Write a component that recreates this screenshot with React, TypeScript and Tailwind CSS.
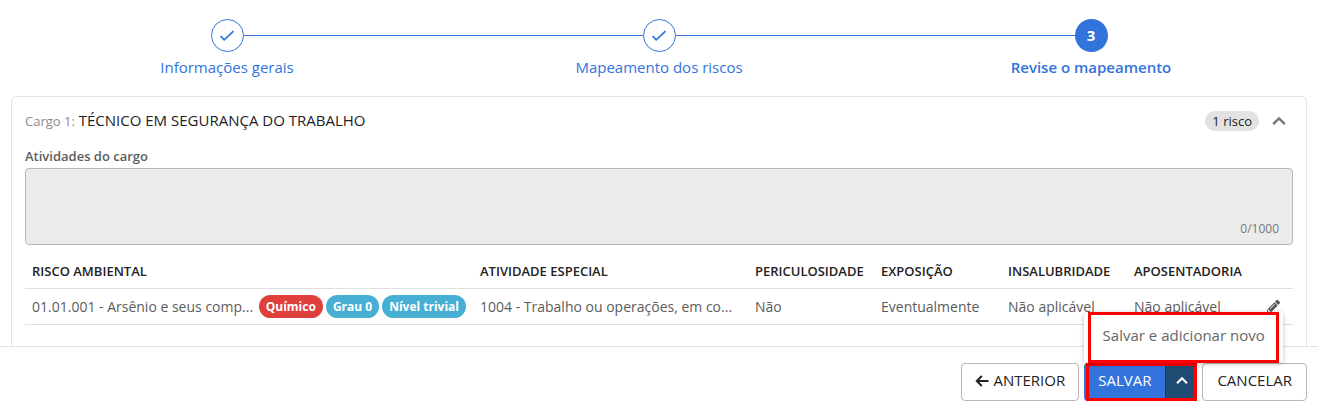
import React from "react";

const steps = [
  { label: "Informações gerais", done: true },
  { label: "Mapeamento dos riscos", done: true },
  { label: "Revise o mapeamento", done: false },
];

const riscos = [
  {
    risco: "01.01.001 - Arsênio e seus comp...",
    tags: [
      { text: "Químico", color: "bg-[#df403c]" },
      { text: "Grau 0", color: "bg-[#48afd4]" },
      { text: "Nível trivial", color: "bg-[#48afd4]" },
    ],
    atividade: "1004 - Trabalho ou operações, em co...",
    periculosidade: "Não",
    exposicao: "Eventualmente",
    insalubridade: "Não aplicável",
    aposentadoria: "Não aplicável",
  },
];

function CheckIcon() {
  return (
    <svg width="16" height="12" viewBox="0 0 16 12" fill="none" stroke="currentColor" strokeWidth="1.8">
      <path d="M1.5 6.2 L5.2 9.8 L14.5 1.2" />
    </svg>
  );
}

function ChevronUp({ className }: { className: string }) {
  return (
    <svg className={className} viewBox="0 0 14 10" fill="none" stroke="currentColor" strokeWidth="2.4">
      <path d="M1.2 8.2 L7 2.4 L12.8 8.2" />
    </svg>
  );
}

function ArrowLeft() {
  return (
    <svg width="14" height="12" viewBox="0 0 14 12" fill="none" stroke="currentColor" strokeWidth="2">
      <path d="M13.5 6 H1.8 M6.8 1 L1.8 6 L6.8 11" />
    </svg>
  );
}

function PencilIcon() {
  return (
    <svg width="13" height="13" viewBox="0 0 512 512" fill="currentColor">
      <path d="M497.9 142.1l-46.1 46.1c-4.700 4.700-12.300 4.700-17 0l-111-111c-4.700-4.700-4.700-12.300 0-17l46.100-46.100c18.700-18.700 49.100-18.700 67.900 0l60.100 60.100c18.800 18.700 18.800 49.100 0 67.900zM284.200 99.800L21.600 362.400.4 483.900c-2.900 16.400 11.400 30.600 27.800 27.800l121.500-21.300 262.600-262.600c4.700-4.700 4.700-12.300 0-17l-111-111c-4.800-4.700-12.400-4.700-17.100 0zM124.100 339.900c-5.500-5.500-5.500-14.300 0-19.800l154-154c5.500-5.500 14.300-5.500 19.800 0s5.500 14.300 0 19.800l-154 154c-5.500 5.500-14.300 5.500-19.800 0zM88 424h48v36.300l-64.500 11.300-31.100-31.100L51.700 376H88v48z" />
    </svg>
  );
}

export default function App() {
  return (
    <div className="bg-white font-['Open_Sans',sans-serif] text-[#222]">
      {/* Steps */}
      <ol className="grid grid-cols-3 px-[11px] pt-[19px] text-[#3273dc]">
        {steps.map((step, i) => (
          <li key={step.label} className="flex flex-col items-center">
            <div className="flex w-full items-center">
              <span className={i === 0 ? "h-px flex-1" : "h-px flex-1 bg-[#3273dc]"} />
              <span
                className={
                  step.done
                    ? "flex size-[33px] items-center justify-center rounded-full border border-[#3273dc]"
                    : "flex size-[33px] items-center justify-center rounded-full bg-[#3273dc] text-[15px] font-bold text-white"
                }
              >
                {step.done ? <CheckIcon /> : i + 1}
              </span>
              <span className={i === steps.length - 1 ? "h-px flex-1" : "h-px flex-1 bg-[#3273dc]"} />
            </div>
            <span className={step.done ? "mt-[3px] text-[15px] leading-6" : "mt-[3px] text-[15px] leading-6 font-semibold"}>
              {step.label}
            </span>
          </li>
        ))}
      </ol>

      {/* Cargo */}
      <main className="px-[11px] pt-[17px]">
        <section className="rounded-t-md border border-b-0 border-[#e2e2e2] px-[13px] pt-[11px] pb-[21px]">
          <header className="flex items-center justify-between">
            <h2 className="text-[15px] leading-6">
              <span className="text-[13px] text-[#8c8c8c]">Cargo 1:</span> TÉCNICO EM SEGURANÇA DO TRABALHO
            </h2>
            <div className="flex items-center gap-[13px] pr-[7px]">
              <span className="rounded-full bg-[#e2e2e2] px-[7px] text-[13px] leading-5">1 risco</span>
              <button type="button" aria-label="Recolher cargo" className="text-[#777]">
                <ChevronUp className="h-[10px] w-[14px]" />
              </button>
            </div>
          </header>

          <label htmlFor="atividades" className="mt-[11px] block text-[13px] leading-6 font-semibold text-[#5c5c5c]">
            Atividades do cargo
          </label>
          <div className="relative">
            <textarea
              id="atividades"
              disabled
              className="block h-[77px] w-full resize-none rounded border border-[#b8b8b8] bg-[#ececec]"
            />
            <span className="absolute right-[14px] bottom-2 text-[12px] leading-4 text-[#777]">0/1000</span>
          </div>

          <table className="mt-[10px] w-full table-fixed text-left text-[14px] text-[#5c5c5c]">
            <thead>
              <tr className="h-[33px] border-b border-[#e0e0e0] text-[13px] whitespace-nowrap text-[#222]">
                <th className="px-[7px] font-semibold">RISCO AMBIENTAL</th>
                <th className="w-[275px] px-[7px] font-semibold">ATIVIDADE ESPECIAL</th>
                <th className="w-[126px] px-[7px] font-semibold">PERICULOSIDADE</th>
                <th className="w-[127px] px-[7px] font-semibold">EXPOSIÇÃO</th>
                <th className="w-[126px] px-[7px] font-semibold">INSALUBRIDADE</th>
                <th className="w-[126px] px-[7px] font-semibold">APOSENTADORIA</th>
                <th className="w-[40px]" />
              </tr>
            </thead>
            <tbody>
              {riscos.map((r) => (
                <tr key={r.risco} className="h-9 border-b border-[#e0e0e0] whitespace-nowrap">
                  <td className="px-[7px]">
                    <div className="flex items-center gap-[3px]">
                      <span className="flex-1">{r.risco}</span>
                      {r.tags.map((tag) => (
                        <span
                          key={tag.text}
                          className={`rounded-full px-[7px] text-[12px] leading-[23px] font-bold text-white ${tag.color}`}
                        >
                          {tag.text}
                        </span>
                      ))}
                    </div>
                  </td>
                  <td className="px-[7px]">{r.atividade}</td>
                  <td className="px-[7px]">{r.periculosidade}</td>
                  <td className="px-[7px]">{r.exposicao}</td>
                  <td className="px-[7px]">{r.insalubridade}</td>
                  <td className="px-[7px]">{r.aposentadoria}</td>
                  <td>
                    <button type="button" aria-label="Editar risco" className="mx-auto block text-[#555]">
                      <PencilIcon />
                    </button>
                  </td>
                </tr>
              ))}
            </tbody>
          </table>
        </section>
      </main>

      {/* Actions */}
      <footer className="flex justify-end gap-[5px] border-t border-[#e2e2e2] px-[11px] pt-4 pb-2 text-[15px]">
        <button type="button" className="flex h-[38px] items-center gap-1 rounded border border-[#b8b8b8] px-[13px] pb-[2px]">
          <ArrowLeft />
          ANTERIOR
        </button>

        <div className="relative flex h-[38px]">
          <button type="button" className="rounded-l bg-[#3273dc] px-[14px] pb-[2px] font-medium text-white">
            SALVAR
          </button>
          <button
            type="button"
            aria-label="Mais opções"
            className="flex w-8 items-center justify-center rounded-r border-l border-[#173a5a] bg-[#204b72] pb-[2px] text-white"
          >
            <ChevronUp className="h-[9px] w-3" />
          </button>
          <span className="pointer-events-none absolute inset-y-0 right-0 left-[2px] border-3 border-[#ff0000]" />

          {/* Dropdown */}
          <div className="absolute bottom-full left-0 rounded bg-white px-1 shadow-[0_1px_5px_rgba(0,0,0,0.25)]">
            <button
              type="button"
              className="h-[51px] min-w-[191px] border-3 border-[#ff0000] px-[9px] pb-1 whitespace-nowrap text-[#666]"
            >
              Salvar e adicionar novo
            </button>
          </div>
        </div>

        <button type="button" className="h-[38px] rounded border border-[#b8b8b8] px-[14px] pb-[2px]">
          CANCELAR
        </button>
      </footer>
    </div>
  );
}
